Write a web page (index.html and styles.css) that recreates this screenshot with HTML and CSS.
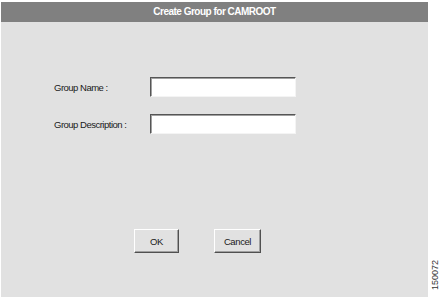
FILE: index.html
```html
<!DOCTYPE html>
<html lang="en">
<head>
    <meta charset="UTF-8">
    <title>Create Group for CAMROOT</title>
    <link rel="stylesheet" href="styles.css">
</head>
<body>
    <div class="page">
        <div class="dialog">
            <div class="title-bar">Create Group for CAMROOT</div>

            <div class="form">
                <div class="row">
                    <label class="label" for="groupName">Group Name :</label>
                    <input class="field" id="groupName" type="text">
                </div>
                <div class="row">
                    <label class="label" for="groupDesc">Group Description :</label>
                    <input class="field" id="groupDesc" type="text">
                </div>
            </div>

            <div class="actions">
                <button class="btn btn-ok">OK</button>
                <button class="btn btn-cancel">Cancel</button>
            </div>
        </div>

        <div class="figure-id">150072</div>
    </div>
</body>
</html>
```

FILE: styles.css
```css
* {
    margin: 0;
    padding: 0;
    box-sizing: border-box;
}

body {
    font-family: "Liberation Sans", Arial, sans-serif;
    background: #ffffff;
    width: 440px;
    height: 299px;
    overflow: hidden;
}

.page {
    display: flex;
    height: 299px;
    padding: 2px 0 2px 1px;
}

.dialog {
    width: 429px;
    background: #e1e1e1;
    display: flex;
    flex-direction: column;
}

.title-bar {
    height: 20px;
    background: #808080;
    color: #ffffff;
    font-size: 10px;
    font-weight: bold;
    letter-spacing: -0.5px;
    text-align: center;
    line-height: 20px;
}

.form {
    padding: 55px 0 0 53px;
    display: flex;
    flex-direction: column;
    gap: 17px;
}

.row {
    display: flex;
    align-items: center;
    height: 20px;
}

.label {
    width: 96px;
    font-size: 9.5px;
    letter-spacing: -0.5px;
    color: #1a1a1a;
}

.field {
    width: 146px;
    height: 20px;
    background: #ffffff;
    border: 1px solid;
    border-color: #555555 #f4f4f4 #f4f4f4 #555555;
    box-shadow: inset 1px 1px 0 #a0a0a0;
    outline: none;
}

.actions {
    display: flex;
    padding: 95px 0 0 133px;
    gap: 35px;
}

.btn {
    height: 24px;
    background: #e1e1e1;
    border: 1px solid;
    border-color: #ffffff #505050 #505050 #ffffff;
    box-shadow: inset -1px -1px 0 #a0a0a0;
    font-family: "Liberation Sans", Arial, sans-serif;
    font-size: 9.5px;
    letter-spacing: -0.4px;
    color: #1a1a1a;
}

.btn-ok {
    width: 45px;
}

.btn-cancel {
    width: 47px;
}

.figure-id {
    writing-mode: vertical-rl;
    transform: rotate(180deg);
    align-self: flex-end;
    font-size: 9px;
    color: #333333;
    margin: 0 0 7px 2px;
}
```
